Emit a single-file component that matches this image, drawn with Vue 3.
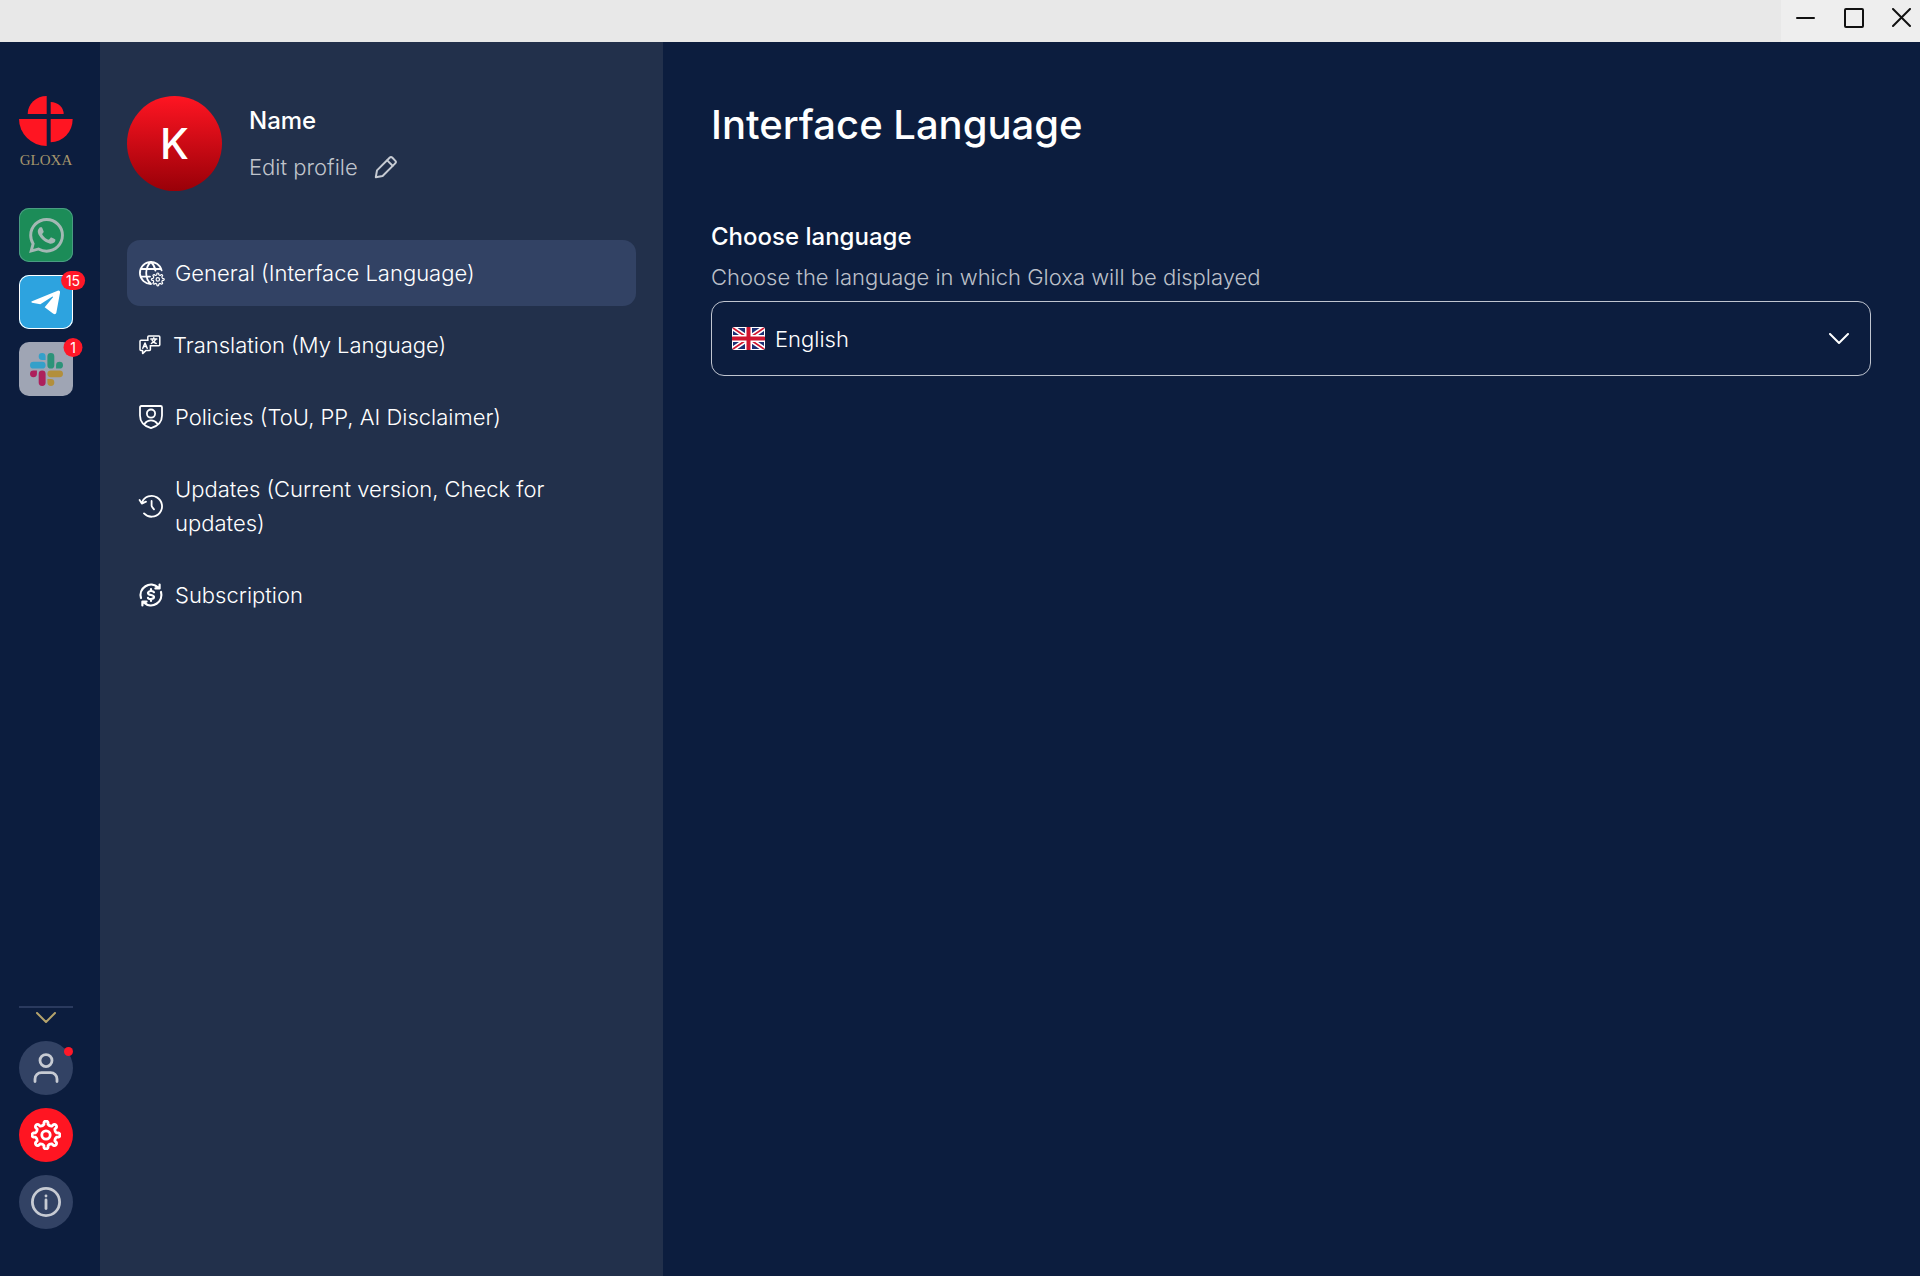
<template>
  <div class="window">
    <header class="titlebar">
      <div class="win-controls">
        <button class="win-btn" type="button" aria-label="Minimize">
          <svg width="20" height="20" viewBox="0 0 20 20"><path d="M1 10H18" /></svg>
        </button>
        <button class="win-btn" type="button" aria-label="Maximize">
          <svg width="20" height="20" viewBox="0 0 20 20"><rect x="1" y="1" width="18" height="18" rx="1" /></svg>
        </button>
        <button class="win-btn" type="button" aria-label="Close">
          <svg width="20" height="20" viewBox="0 0 20 20"><path d="M1 1L18 18M18 1L1 18" /></svg>
        </button>
      </div>
    </header>

    <div class="body">
      <aside class="rail">
        <div class="logo">
          <svg width="54" height="50" viewBox="58 48 162 150">
            <path d="M141 102H84A57 54 0 0 1 141 48Z" />
            <path d="M153 102V66A39 36 0 0 1 192 102Z" />
            <path d="M141 117V198A83 81 0 0 1 58 117Z" />
            <path d="M153 117H219A66 70 0 0 1 153 187Z" />
          </svg>
          <span class="logo-text">GLOXA</span>
        </div>

        <nav class="apps" aria-label="Messengers">
          <button class="app app-whatsapp" type="button" aria-label="WhatsApp">
            <svg width="35" height="35" viewBox="0 0 24 24">
              <path d="M17.472 14.382c-.297-.149-1.758-.867-2.03-.967-.273-.099-.471-.148-.67.15-.197.297-.767.966-.94 1.164-.173.199-.347.223-.644.075-.297-.15-1.255-.463-2.39-1.475-.883-.788-1.48-1.761-1.653-2.059-.173-.297-.018-.458.13-.606.134-.133.298-.347.446-.52.149-.174.198-.298.298-.497.099-.198.05-.371-.025-.52-.075-.149-.669-1.612-.916-2.207-.242-.579-.487-.5-.669-.51-.173-.008-.371-.01-.57-.01-.198 0-.52.074-.792.372-.272.297-1.04 1.016-1.04 2.479 0 1.462 1.065 2.875 1.213 3.074.149.198 2.096 3.2 5.077 4.487.709.306 1.262.489 1.694.625.712.227 1.36.195 1.871.118.571-.085 1.758-.719 2.006-1.413.248-.694.248-1.289.173-1.413-.074-.124-.272-.198-.57-.347m-5.421 7.403h-.004a9.87 9.87 0 01-5.031-1.378l-.361-.214-3.741.982.998-3.648-.235-.374a9.86 9.86 0 01-1.51-5.26c.001-5.45 4.436-9.884 9.888-9.884 2.64 0 5.122 1.03 6.988 2.898a9.825 9.825 0 012.893 6.994c-.003 5.45-4.437 9.884-9.885 9.884m8.413-18.297A11.815 11.815 0 0012.05 0C5.495 0 .16 5.335.157 11.892c0 2.096.547 4.142 1.588 5.945L.057 24l6.305-1.654a11.882 11.882 0 005.683 1.448h.005c6.554 0 11.89-5.335 11.893-11.893a11.821 11.821 0 00-3.48-8.413z" />
            </svg>
          </button>
          <button class="app app-telegram" type="button" aria-label="Telegram">
            <svg width="30" height="25" viewBox="0 0 90 75">
              <path d="M3 34L80 2Q88 0 87 8L76 68Q74 75 67 71L41 52L66 22Q67 18 62 21L28 43L3 38Q-1 36 3 34Z" />
            </svg>
            <span class="badge">15</span>
          </button>
          <button class="app app-slack" type="button" aria-label="Slack">
            <svg width="33" height="33" viewBox="0 0 24 24">
              <path fill="#ad1f5c" d="M5.042 15.165a2.528 2.528 0 0 1-2.52 2.523A2.528 2.528 0 0 1 0 15.165a2.527 2.527 0 0 1 2.522-2.52h2.52v2.52zM6.313 15.165a2.527 2.527 0 0 1 2.521-2.52 2.527 2.527 0 0 1 2.521 2.52v6.313A2.528 2.528 0 0 1 8.834 24a2.528 2.528 0 0 1-2.521-2.522v-6.313z" />
              <path fill="#34a0c9" d="M8.834 5.042a2.528 2.528 0 0 1-2.521-2.52A2.528 2.528 0 0 1 8.834 0a2.528 2.528 0 0 1 2.521 2.522v2.52H8.834zM8.834 6.313a2.528 2.528 0 0 1 2.521 2.521 2.528 2.528 0 0 1-2.521 2.521H2.522A2.528 2.528 0 0 1 0 8.834a2.528 2.528 0 0 1 2.522-2.521h6.312z" />
              <path fill="#2c9379" d="M18.956 8.834a2.528 2.528 0 0 1 2.522-2.521A2.528 2.528 0 0 1 24 8.834a2.528 2.528 0 0 1-2.522 2.521h-2.522V8.834zM17.688 8.834a2.528 2.528 0 0 1-2.523 2.521 2.527 2.527 0 0 1-2.52-2.521V2.522A2.527 2.527 0 0 1 15.165 0a2.528 2.528 0 0 1 2.523 2.522v6.312z" />
              <path fill="#b28f3c" d="M15.165 18.956a2.528 2.528 0 0 1 2.523 2.522A2.528 2.528 0 0 1 15.165 24a2.527 2.527 0 0 1-2.52-2.522v-2.522h2.52zM15.165 17.688a2.527 2.527 0 0 1-2.52-2.523 2.526 2.526 0 0 1 2.52-2.52h6.313A2.527 2.527 0 0 1 24 15.165a2.528 2.528 0 0 1-2.522 2.523h-6.313z" />
            </svg>
            <span class="badge">1</span>
          </button>
        </nav>

        <div class="rail-bottom">
          <button class="more" type="button" aria-label="Show more">
            <svg width="20" height="11" viewBox="0 0 20 11"><path d="M1 1L10 10L19 1" /></svg>
          </button>
          <button class="round" type="button" aria-label="Account">
            <svg width="26" height="30" viewBox="0 0 26 30">
              <circle cx="13" cy="7.6" r="6" />
              <path d="M2 28.6V26A6.4 6.4 0 0 1 8.4 19.6H17.6A6.4 6.4 0 0 1 24 26V28.6" />
            </svg>
            <span class="dot"></span>
          </button>
          <button class="round round-active" type="button" aria-label="Settings">
            <svg width="30" height="30" viewBox="0 0 30 30">
              <path :d="gearPath(15, 15, 10, 14)" />
              <circle cx="15" cy="15" r="4.2" />
            </svg>
          </button>
          <button class="round" type="button" aria-label="About">
            <svg width="30" height="30" viewBox="0 0 30 30">
              <circle cx="15" cy="15" r="13.6" />
              <path d="M15 13V21.5" />
              <path d="M15 8.8V9" />
            </svg>
          </button>
        </div>
      </aside>

      <section class="panel">
        <div class="profile">
          <div class="avatar">K</div>
          <div class="profile-info">
            <span class="profile-name">Name</span>
            <button class="edit" type="button">
              Edit profile
              <svg width="24" height="24" viewBox="0 0 24 24">
                <path d="M1.8 22.2L3 15.4L15.6 2.8Q17 1.4 18.4 2.8L21.2 5.6Q22.6 7 21.2 8.4L8.6 21Z" />
                <path d="M13.2 5.4L18.6 10.8" />
              </svg>
            </button>
          </div>
        </div>

        <nav class="menu" aria-label="Settings">
          <button
            v-for="item in items"
            :key="item.id"
            class="menu-item"
            :class="{ active: item.id === selected }"
            type="button"
            @click="selected = item.id"
          >
            <svg v-if="item.id === 'general'" class="menu-icon" width="24" height="24" viewBox="0 0 24 24">
              <path d="M12 23A11 11 0 1 1 22.6 9.4M1.6 8H22M1.6 15.6H11M12 1C5.6 6.5 5.6 17.5 12 23M12 1C14.6 3.4 16 6.4 16.4 9.6" />
              <path class="thin" :d="gearPath(18.8, 18.4, 4.6, 6.4)" />
              <circle class="thin" cx="18.8" cy="18.4" r="1.7" />
            </svg>
            <svg v-else-if="item.id === 'translation'" class="menu-icon" width="22" height="20" viewBox="0 0 22 20">
              <path class="mid" d="M8.8 5.2V2Q8.8 1 9.8 1H19.8Q20.8 1 20.8 2V9.8Q20.8 10.8 19.8 10.8H11.4" />
              <path class="mid" d="M8.8 5.2H2Q1 5.2 1 6.2V14.6Q1 15.6 2 15.6H3.6V18.6L6.8 15.6H10.4Q11.4 15.6 11.4 14.6V10.8" />
              <path class="mid" d="M3.8 13.2L6 8L8.2 13.2M4.6 11.6H7.4M11.8 4H17.8M14.8 2.8V4M16.6 4.2Q15.8 7 12.4 8.4M13.2 5.4Q14.6 7.8 17.2 8.4" />
            </svg>
            <svg v-else-if="item.id === 'policies'" class="menu-icon" width="24" height="24" viewBox="0 0 24 24">
              <path d="M2.4 1H21.6Q23 1 23 2.4V10.5C23 17 18.6 21.2 12 23.2C5.4 21.2 1 17 1 10.5V2.4Q1 1 2.4 1Z" />
              <circle cx="12" cy="8.6" r="4.1" />
              <path d="M5.6 18.8Q8 15.4 12 15.4T18.4 18.8" />
            </svg>
            <svg v-else-if="item.id === 'updates'" class="menu-icon" width="24" height="24" viewBox="0 0 24 24">
              <path d="M3 8.4A10.4 10.4 0 1 1 5 19.4M.6 6L2.8 9.6L7 7.6M12.6 7V11.6Q12.6 12.6 13.4 13.4L15 15.4" />
            </svg>
            <svg v-else class="menu-icon bold" width="24" height="24" viewBox="0 0 24 24">
              <path d="M2 15A10.4 10.4 0 0 1 19 4.4M22 9A10.4 10.4 0 0 1 5 19.6M20.6 1.6V5.4H16.4M3.4 22.4V18.6H7.6" />
              <path d="M15 9.2Q14.4 8 12 8T9 9.9Q9 11.4 12 12T15 14.1Q15 16 12 16T9 14.8M12 6V8M12 16V18" />
            </svg>
            <span>{{ item.label }}</span>
          </button>
        </nav>
      </section>

      <main class="content">
        <h1 class="title">Interface Language</h1>
        <label class="field-label" for="language">Choose language</label>
        <p id="language-hint" class="field-hint">Choose the language in which Gloxa will be displayed</p>
        <div class="select-wrap">
          <select id="language" v-model="language" class="select" aria-describedby="language-hint">
            <option value="en">English</option>
          </select>
          <svg class="flag" width="33" height="23" viewBox="0 0 33 23">
            <clipPath id="flag-shape"><rect width="33" height="23" rx="3" /></clipPath>
            <g clip-path="url(#flag-shape)">
              <rect width="33" height="23" fill="#fff" />
              <rect x="1" y="1" width="31" height="21" fill="#1d2f74" />
              <path d="M1 1L32 22M32 1L1 22" stroke="#fff" stroke-width="5" />
              <path d="M1 1L32 22M32 1L1 22" stroke="#d0152f" stroke-width="1.6" />
              <path d="M16.5 0V23M0 11.5H33" stroke="#fff" stroke-width="7" />
              <path d="M16.5 1V22M1 11.5H32" stroke="#d0152f" stroke-width="4" />
            </g>
          </svg>
          <svg class="arrow" width="20" height="12" viewBox="0 0 20 12"><path d="M1 1L10 10L19 1" /></svg>
        </div>
      </main>
    </div>
  </div>
</template>

<script setup>
import { ref } from 'vue'

const selected = ref('general')
const language = ref('en')

const items = [
  { id: 'general', label: 'General (Interface Language)' },
  { id: 'translation', label: 'Translation (My Language)' },
  { id: 'policies', label: 'Policies (ToU, PP, AI Disclaimer)' },
  { id: 'updates', label: 'Updates (Current version, Check for updates)' },
  { id: 'subscription', label: 'Subscription' },
]

// eight-tooth gear outline
function gearPath(cx, cy, inner, outer) {
  const pt = (r, deg) => {
    const a = (deg * Math.PI) / 180
    return `${(cx + r * Math.sin(a)).toFixed(2)} ${(cy - r * Math.cos(a)).toFixed(2)}`
  }
  let d = ''
  for (let i = 0; i < 8; i++) {
    const a = i * 45
    const r = outer * 0.16
    d += `${i ? 'L' : 'M'}${pt(outer - r / 2, a - 9)}`
    d += `A${r} ${r} 0 0 1 ${pt(outer - r / 2, a + 9)}`
    d += `L${pt(inner + r / 3, a + 11)}`
    d += `Q${pt(inner - r / 3, a + 22.5)} ${pt(inner + r / 3, a + 34)}`
  }
  return d + 'Z'
}
</script>

<style>
body { background: #0c1d3e; }
</style>

<style scoped>
.window {
  min-height: 100vh; display: flex; flex-direction: column;
  background: #0c1d3e; color: #fff;
  font-family: Inter, 'Liberation Sans', sans-serif;
}
button { font: inherit; color: inherit; border: 0; padding: 0; background: none; cursor: pointer; }
svg { display: block; flex-shrink: 0; fill: none; stroke-linecap: round; stroke-linejoin: round; }

.titlebar { height: 42px; display: flex; justify-content: flex-end; background: #e8e8e8; }
.win-controls {
  display: flex; align-items: flex-start; gap: 28px;
  padding: 8px 8px 0 15px; background: #eee;
}
.win-btn svg { stroke: #111; stroke-width: 2; }

.body { flex: 1; display: flex; }

.rail {
  width: 100px; flex-shrink: 0; box-sizing: border-box;
  padding: 54px 27px 47px 19px;
  display: flex; flex-direction: column;
}
.logo { display: flex; flex-direction: column; align-items: center; gap: 4px; }
.logo svg { fill: #ff1522; }
.logo-text {
  font-family: 'Liberation Serif', serif; font-size: 15px; line-height: 20px; color: #a5956d;
}
.apps { display: flex; flex-direction: column; gap: 13px; margin-top: 38px; }
.app {
  position: relative; width: 54px; height: 54px; border-radius: 10px;
  display: flex; align-items: center; justify-content: center;
}
.app-whatsapp { background: #1c8c58; box-shadow: inset 0 0 0 1px #4a9c82; }
.app-whatsapp svg { fill: #a3b8b4; }
.app-telegram { background: #2da3df; box-shadow: inset 0 0 0 1px #fff; }
.app-telegram svg { fill: #fff; }
.app-slack { background: #9fa5b4; }
.badge {
  position: absolute; top: -4px; right: 0; transform: translateX(50%);
  min-width: 19px; height: 19px; box-sizing: border-box; padding: 0 5px; border-radius: 10px;
  background: #ff1828; font-size: 14px; line-height: 19px; text-align: center;
}

.rail-bottom { margin-top: auto; display: flex; flex-direction: column; gap: 13px; }
.more {
  height: 22px; box-sizing: border-box; border-top: 2px solid #2a3a5e; padding-top: 4px;
  display: flex; align-items: flex-start; justify-content: center;
}
.more svg { stroke: #b5a36c; stroke-width: 2; }
.round {
  position: relative; width: 54px; height: 54px; border-radius: 50%; background: #324264;
  display: flex; align-items: center; justify-content: center;
}
.round svg { stroke: #c7cbd3; stroke-width: 2.8; }
.round-active { background: #ff1522; }
.round-active svg { stroke: #fff; }
.dot {
  position: absolute; top: 6px; right: 0; width: 9px; height: 9px;
  border-radius: 50%; background: #ff1828;
}

.panel {
  width: 563px; flex-shrink: 0; box-sizing: border-box;
  padding: 54px 27px; background: #22304b;
}
.profile { display: flex; gap: 27px; }
.avatar {
  width: 95px; height: 95px; border-radius: 50%;
  background: linear-gradient(#ff1522, #990008);
  display: flex; align-items: center; justify-content: center;
  font-size: 42px; font-weight: 500;
}
.profile-info { display: flex; flex-direction: column; align-items: flex-start; gap: 13px; padding-top: 9px; }
.profile-name { font-size: 24px; line-height: 32px; font-weight: 500; }
.edit {
  display: flex; align-items: center; gap: 16px;
  font-size: 22px; font-weight: 300; line-height: 34px; color: #c0c4cc;
}
.edit svg { stroke: #c7cbd3; stroke-width: 2; }

.menu { display: flex; flex-direction: column; gap: 6px; margin-top: 49px; }
.menu-item {
  display: flex; align-items: center; gap: 12px; padding: 16px 12px; border-radius: 13px;
  font-size: 22px; font-weight: 300; line-height: 34px; text-align: left; color: #fff;
}
.menu-item.active { background: #324264; }
.menu-icon { overflow: visible; stroke: #fff; stroke-width: 1.8; }
.menu-icon.bold { stroke-width: 2.2; }
.menu-icon .thin { stroke-width: 1.2; }
.menu-icon .mid { stroke-width: 1.5; }

.content { flex: 1; min-width: 0; padding: 54px 49px 54px 48px; }
.title { margin: 0 0 64px; font-size: 40px; line-height: 58px; font-weight: 500; }
.field-label { display: block; font-size: 24px; line-height: 38px; font-weight: 500; }
.field-hint { margin: 4px 0 7px; font-size: 22px; font-weight: 300; line-height: 34px; color: #bcc0c9; }
.select-wrap { display: grid; align-items: center; }
.select-wrap > * { grid-area: 1 / 1; }
.select {
  appearance: none; width: 100%; height: 75px; padding: 0 63px;
  border: 1px solid #c0c5d0; border-radius: 13px; background: transparent;
  font: inherit; font-size: 22px; font-weight: 300; color: #fff; cursor: pointer;
}
.flag { margin-left: 21px; pointer-events: none; }
.arrow { justify-self: end; margin-right: 22px; stroke: #fff; stroke-width: 2; pointer-events: none; }
</style>
